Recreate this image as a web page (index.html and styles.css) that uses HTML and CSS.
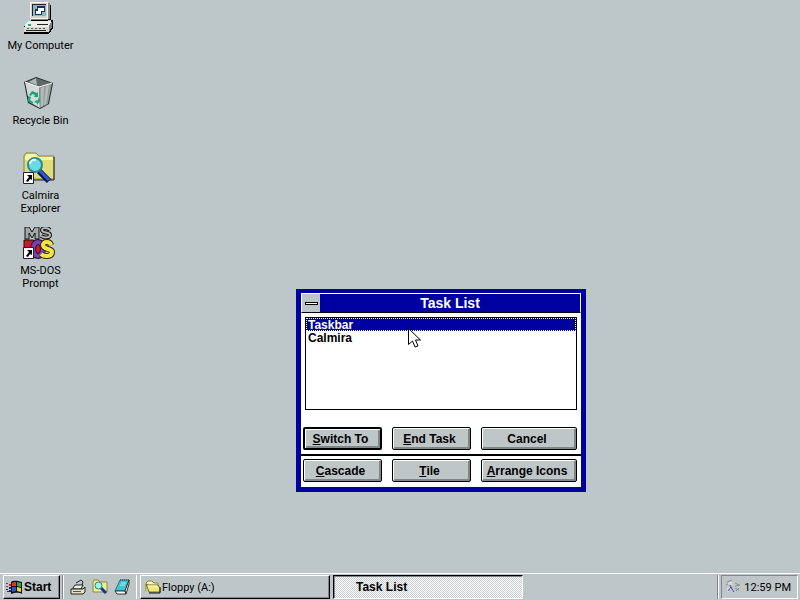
FILE: index.html
```html
<!DOCTYPE html>
<html lang="en">
<head>
<meta charset="utf-8">
<title>Desktop</title>
<link rel="stylesheet" href="styles.css">
</head>
<body>
<main class="desktop">
  <nav class="shortcuts" aria-label="Desktop">
    <a class="shortcut" href="#computer">
      <svg class="shortcut-icon" viewBox="0 0 32 32" aria-hidden="true" shape-rendering="crispEdges">
        <path d="M8 1h18v2h2v15h-3v2H8z" fill="#000"/>
        <path d="M7 0h18v18H7z" fill="#f4f4ea"/>
        <path d="M25 1h2v16h-2zM8 17h17v1H8z" fill="#808784"/>
        <path d="M8 1h16v15H8z" fill="#d2d5cf"/>
        <path d="M9 2h14v12H9z" fill="#222"/>
        <path d="M10 3h13v11H10z" fill="#8fb6c0"/>
        <path d="M14 4h8v6h-8zM12 7h7v6h-7z" fill="#113366"/>
        <path d="M15 6h6v3h-6zM13 9h5v3h-5z" fill="#fff"/>
        <path d="M5 19h23v-1h2v8l-4 6H1v-7z" fill="#000"/>
        <path d="M5 19h23v6H2v-3z" fill="#efefe5"/>
        <path d="M1 25h25v5H1z" fill="#d9dad2"/>
        <path d="M26 24l3-5v6l-3 5z" fill="#7d817d"/>
        <path d="M5 22h3v2H5z" fill="#28aa78"/>
        <path d="M14 22h11v1H14zM3 28h20v1H3z" fill="#222"/>
        <path d="M4 26h2v1H4zM8 26h2v1H8zM12 26h2v1h-2zM16 26h2v1h-2zM20 26h2v1h-2z" fill="#555"/>
      </svg>
      <span>My Computer</span>
    </a>
    <a class="shortcut" href="#recycle">
      <svg class="shortcut-icon" viewBox="0 0 32 32" aria-hidden="true">
        <path d="M2 5l12-5 17 6-4 21-9 5-12-6z" fill="#232826"/>
        <path d="M3 5l14 5 1 21-11-6z" fill="#d5dad9"/>
        <path d="M17 10l13-4-4 21-8 4z" fill="#939c9b"/>
        <path d="M19 11l3-1-1 19-2 1zM24 9l3-1-3 19-2 1z" fill="#b4bcbb"/>
        <path d="M4 5l10-4 15 5-12 4z" fill="#5f6867"/>
        <path d="M14 1l1 7-8-3z" fill="#afb7b6"/>
        <path d="M3 5l14 5 13-4" stroke="#fff" fill="none"/>
        <path d="M7 18l3-4 5 2 1-1v5h-4l1-2-3-1-1 2z" fill="#17a378"/>
        <path d="M6 19l3 1-1 3 3 2v2l-5-3zM17 20l1 4-3 4v-2l-3-1 3-2v1l1-1z" fill="#17a378"/>
      </svg>
      <span>Recycle Bin</span>
    </a>
    <a class="shortcut" href="#explorer">
      <svg class="shortcut-icon" viewBox="0 0 32 32" aria-hidden="true">
        <path d="M1 4l2-3h10l3 3h15v23H1z" fill="#dedd78" stroke="#89893c"/>
        <path d="M2 5l2-3h8l3 3h15v3H2z" fill="#f5f5ae"/>
        <path d="M31 5v23H10" stroke="#222" fill="none"/>
        <path d="M16 19l10 10" stroke="#071461" stroke-width="6"/>
        <path d="M17 19l9 9" stroke="#315cce" stroke-width="3"/>
        <circle cx="12" cy="13" r="7" fill="#67dce5" stroke="#32868f" stroke-width="2"/>
        <path d="M7 12c0-3 3-5 6-4" stroke="#effeff" stroke-width="2" fill="none"/>
        <path d="M.5 20.500h10v11H.5z" fill="#fff" stroke="#222"/>
        <path d="M4 23h5v5l-2-1-2 3-2-1 3-4z" fill="#000"/>
      </svg>
      <span>Calmira<br>Explorer</span>
    </a>
    <a class="shortcut" href="#dos">
      <svg class="shortcut-icon" viewBox="0 0 32 32" aria-hidden="true">
        <path d="M2 12V0h4l3 5 3-5h4v12h-4V6l-3 5-3-5v6z" fill="#a4a8a8" stroke="#111"/>
        <path d="M27 3c-3-3-8-2-8 0 0 4 8 1 8 5 0 3-6 3-9 1" stroke="#111" stroke-width="4" fill="none"/>
        <path d="M27 3c-3-3-8-2-8 0 0 4 8 1 8 5 0 3-6 3-9 1" stroke="#b4b8b8" stroke-width="2" fill="none"/>
        <path d="M1 13h9c6 1 8 13 1 18H1z" fill="#d41526" stroke="#111"/>
        <ellipse cx="15" cy="22" rx="5" ry="7" fill="#d41526" stroke="#221055" stroke-width="6"/>
        <ellipse cx="15" cy="22" rx="5" ry="7" fill="none" stroke="#7844aa" stroke-width="4"/>
        <path d="M28 18c-1-4-8-4-8 0 0 5 9 3 9 7 0 5-8 5-11 2" stroke="#332900" stroke-width="6" fill="none"/>
        <path d="M28 18c-1-4-8-4-8 0 0 5 9 3 9 7 0 5-8 5-11 2" stroke="#f4e641" stroke-width="4" fill="none"/>
        <path d="M.5 20.500h10v11H.5z" fill="#fff" stroke="#222"/>
        <path d="M4 23h5v5l-2-1-2 3-2-1 3-4z" fill="#000"/>
      </svg>
      <span>MS-DOS<br>Prompt</span>
    </a>
  </nav>

  <section class="window" aria-labelledby="window-title">
    <header class="titlebar">
      <button class="system-menu" type="button" aria-label="Control menu"><span class="menu-dash"></span></button>
      <h1 id="window-title">Task List</h1>
    </header>
    <ul class="task-list" role="listbox" aria-label="Tasks" tabindex="0">
      <li class="selected" role="option" aria-selected="true">Taskbar</li>
      <li role="option" aria-selected="false">Calmira</li>
    </ul>
    <div class="button-row">
      <button class="push default" type="button"><u>S</u>witch To</button>
      <button class="push" type="button"><u>E</u>nd Task</button>
      <button class="push" type="button">Cancel</button>
    </div>
    <div class="button-row divided">
      <button class="push" type="button"><u>C</u>ascade</button>
      <button class="push" type="button"><u>T</u>ile</button>
      <button class="push" type="button"><u>A</u>rrange Icons</button>
    </div>
  </section>

  <svg class="pointer" viewBox="0 0 13 20" aria-hidden="true">
    <path d="M.5 .5v16l4-3.500 2.500 6 3-1-2.500-6h5z" fill="#fff" stroke="#000"/>
  </svg>
</main>

<footer class="taskbar">
  <button class="start" type="button">
    <svg class="small-icon" viewBox="0 0 16 16" aria-hidden="true">
      <path d="M5 3c3-2 6-1 11 0v12c-4-2-7-1-11 0z" fill="#111"/>
      <path d="M6 4c1-1 2-1 4-1v4H6z" fill="#e3372d"/>
      <path d="M11 3l4 1v4l-4-1z" fill="#35a950"/>
      <path d="M6 8h4v4l-4 1z" fill="#3452c7"/>
      <path d="M11 8l4 1v4l-4-1z" fill="#e8d83d"/>
      <path d="M0 4h2v1H0zM0 7h2v1H0zM3 5h2v2H3z" fill="#b3292c"/>
      <path d="M3 8h2v2H3zM0 10h2v1H0zM1 12h2v1H1zM3 11h2v2H3z" fill="#172477"/>
    </svg>
    <span>Start</span>
  </button>
  <div class="quick-launch">
    <button class="quick" type="button" aria-label="Show desktop">
      <svg class="small-icon" viewBox="0 0 16 16" aria-hidden="true">
        <path d="M3 9l2-3h8l-2 4H3z" fill="#f1f1e7" stroke="#222"/>
        <path d="M6 4l5-3 2 2-1 3" fill="none" stroke="#222"/>
        <path d="M1 10h12l2-2v5l-2 2H1z" fill="#e2e1c2" stroke="#222"/>
        <path d="M3 12.500h8" stroke="#555"/>
      </svg>
    </button>
    <button class="quick" type="button" aria-label="Explorer">
      <svg class="small-icon" viewBox="0 0 16 16" aria-hidden="true">
        <path d="M1 3l1-2h4l2 2h7v10H1z" fill="#f1ee8c" stroke="#8b8946"/>
        <path d="M9 9l5 5" stroke="#17349a" stroke-width="3"/>
        <circle cx="6.500" cy="6.500" r="3.500" fill="#9cf4ee" stroke="#32838b"/>
      </svg>
    </button>
    <button class="quick" type="button" aria-label="Notepad">
      <svg class="small-icon" viewBox="0 0 16 16" aria-hidden="true">
        <path d="M6 1h9l-4 11H1z" fill="#41c4cf" stroke="#28757d"/>
        <path d="M1 12h10l1 3H3zM11 12l4-11v4l-3 10z" fill="#fff" stroke="#333"/>
        <path d="M6 1h9" stroke="#17464b" stroke-dasharray="1 1"/>
        <path d="M7 4h5M6 6h5" stroke="#a1edf0"/>
      </svg>
    </button>
  </div>
  <div class="tasks">
    <button class="task" type="button">
      <svg class="small-icon" viewBox="0 0 16 16" aria-hidden="true">
        <path d="M1 12V4l2-2h4l2 2h4v3" fill="#f8f6a8" stroke="#8b8946"/>
        <path d="M1 5l3 8h11V9l-2-3H3z" fill="#eeea79" stroke="#68672d"/>
        <path d="M4 14h11V8" fill="none" stroke="#111"/>
        <path d="M3 7h9" stroke="#ffffd8"/>
      </svg>
      <span>Floppy (A:)</span>
    </button>
    <button class="task active" type="button" aria-pressed="true"><span>Task List</span></button>
  </div>
  <div class="tray">
    <div class="clock">
      <svg class="small-icon" viewBox="0 0 16 16" aria-hidden="true">
        <path d="M2 3l5-2M1 6l3-2M10 4l4 2M10 7l5-1M10 9l4 2M11 12l3-3" stroke="#858c8d"/>
        <path d="M3 5l3-2v3M3 13V9l3 1" stroke="#f0f0f0" fill="none"/>
        <path d="M5 6l2 4 2 3M6 8l-3 4" stroke="#4545a1" fill="none"/>
      </svg>
      <time datetime="12:59">12:59 PM</time>
    </div>
  </div>
</footer>
</body>
</html>
```
FILE: styles.css
```css
:root {
  --face: #bfc6c8;
  --navy: #0000a0;
  --shadow: #7f8789;
}

* {
  box-sizing: border-box;
}

body {
  margin: 0;
  min-height: 100vh;
  display: flex;
  flex-direction: column;
  background: #bdc6c8;
  color: #000;
  font: 11px/13px Roboto, "Liberation Sans", Arial, sans-serif;
}

button {
  margin: 0;
  padding: 0;
  border: 0;
  background: var(--face);
  color: inherit;
  font: inherit;
}

.desktop {
  position: relative;
  flex: 1;
}

.shortcuts {
  display: grid;
  grid-auto-rows: 75px;
  justify-items: center;
  width: 81px;
}

.shortcut {
  display: flex;
  flex-direction: column;
  align-items: center;
  gap: 5px;
  padding-top: 2px;
  color: inherit;
  text-align: center;
  text-decoration: none;
  white-space: nowrap;
}

.shortcut-icon {
  width: 32px;
  height: 32px;
  margin-right: 4px;
}

.window {
  position: absolute;
  left: 296px;
  top: 289px;
  width: 290px;
  border: 5px solid var(--navy);
  border-top-width: 4px;
  background: #fff;
  font-family: "Liberation Sans", Arial, sans-serif;
  font-weight: bold;
  font-size: 12px;
}

.titlebar {
  display: flex;
  height: 20px;
  border: 1px solid #fff;
  border-bottom-color: #000;
  background: var(--navy);
  color: #fff;
}

.titlebar h1 {
  flex: 1;
  margin: 0;
  font-size: 14px;
  line-height: 18px;
  text-align: center;
}

.system-menu {
  display: grid;
  place-items: center;
  width: 18px;
}

.menu-dash {
  width: 13px;
  height: 3px;
  border: 1px solid #000;
  background: #fff;
}

.task-list {
  height: 93px;
  margin: 4px;
  padding: 0;
  border: 1px solid #000;
  list-style: none;
}

.task-list li {
  height: 13px;
  padding: 0 2px;
  line-height: 15px;
}

.task-list .selected {
  background: var(--navy);
  color: #fff;
  outline: 1px dotted #fff;
  outline-offset: -1px;
}

.button-row {
  display: grid;
  grid-template-columns: 79px 79px 1fr;
  column-gap: 10px;
  padding: 13px 4px 4px 2px;
}

.button-row.divided {
  padding-top: 3px;
  padding-bottom: 5px;
  border-top: 2px solid #000;
}

.push {
  height: 23px;
  padding: 2px 4px 0 0;
  border: 1px solid #000;
  border-radius: 2px;
  box-shadow: inset 1px 1px #fff, inset -1px -1px var(--shadow), inset -2px -2px var(--shadow);
}

.push.default {
  border-width: 2px;
}

.pointer {
  position: absolute;
  left: 408px;
  top: 328px;
  width: 13px;
  height: 20px;
}

.taskbar {
  display: flex;
  height: 27px;
  padding: 1px 2px 1px 3px;
  border-top: 1px solid #fff;
  background: var(--face);
}

.small-icon {
  flex: none;
  width: 16px;
  height: 16px;
}

.start,
.task {
  display: flex;
  align-items: center;
  border: 1px solid;
  border-color: #fff #000 #000 #fff;
  box-shadow: inset -1px -1px var(--shadow);
}

.start span,
.task span,
.clock time {
  padding-top: 1px;
}

.start,
.task.active {
  font-family: "Liberation Sans", Arial, sans-serif;
  font-size: 12px;
  font-weight: bold;
}

.start {
  width: 57px;
  gap: 2px;
  padding-left: 2px;
}

.quick-launch {
  display: flex;
  align-items: center;
  gap: 6px;
  margin-left: 2px;
  padding: 0 6px 0 7px;
  border-left: 1px solid var(--shadow);
  border-right: 1px solid #fff;
  box-shadow: inset 1px 0 #fff, 1px 0 var(--face);
}

.quick {
  display: flex;
}

.tasks {
  flex: 1;
  display: grid;
  grid-template-columns: 190px 190px;
  gap: 3px;
  margin-left: 3px;
}

.task {
  gap: 1px;
  padding-left: 4px;
}

.task.active {
  padding-left: 22px;
  border-color: #000 #fff #fff #000;
  box-shadow: inset 1px 1px var(--shadow);
  background: repeating-conic-gradient(#fff 0 25%, #c9cfd0 0 50%) 0 0 / 2px 2px;
}

.tray {
  padding-left: 2px;
  border-left: 1px solid #fff;
  box-shadow: -1px 0 var(--shadow);
}

.clock {
  display: flex;
  align-items: center;
  gap: 3px;
  height: 100%;
  padding: 0 6px 0 3px;
  border: 1px solid;
  border-color: var(--shadow) #fff #fff var(--shadow);
}
```
